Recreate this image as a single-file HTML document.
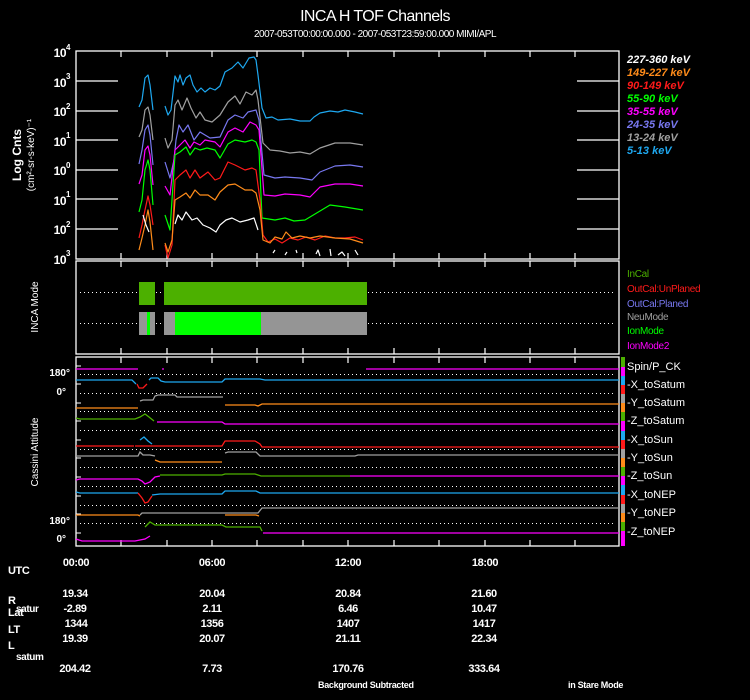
<!DOCTYPE html>
<html><head><meta charset="utf-8"><style>
html,body{margin:0;padding:0;background:#000;}
svg{display:block;font-family:"Liberation Sans",Arial,sans-serif;}
</style></head><body>
<svg width="750" height="700" viewBox="0 0 750 700" xmlns="http://www.w3.org/2000/svg">
<rect width="750" height="700" fill="#000"/>
<text x="375" y="21" fill="#fff" font-size="16" text-anchor="middle" letter-spacing="-0.6">INCA H TOF Channels</text>
<text x="375" y="37" fill="#fff" font-size="10" text-anchor="middle" letter-spacing="-0.5">2007-053T00:00:00.000 - 2007-053T23:59:00.000 MIMI/APL</text>

<g fill="none" stroke="#fff" stroke-width="1.3">
<rect x="76" y="51" width="543" height="208"/>
<rect x="76" y="261" width="543" height="93"/>
<rect x="76" y="357" width="543" height="189"/>
</g>
<g stroke="#fff" stroke-width="1.2">
<path d="M121,51v6M167,51v6M212,51v6M257,51v6M303,51v6M348,51v6M394,51v6M439,51v6M485,51v6M530,51v6M575,51v6"/>
<path d="M121,259v-6M167,259v-6M212,259v-6M257,259v-6M303,259v-6M348,259v-6M394,259v-6M439,259v-6M485,259v-6M530,259v-6M575,259v-6"/>
<path d="M121,261v6M167,261v6M212,261v6M257,261v6M303,261v6M348,261v6M394,261v6M439,261v6M485,261v6M530,261v6M575,261v6"/>
<path d="M121,354v-6M167,354v-6M212,354v-6M257,354v-6M303,354v-6M348,354v-6M394,354v-6M439,354v-6M485,354v-6M530,354v-6M575,354v-6"/>
<path d="M121,357v6M167,357v6M212,357v6M257,357v6M303,357v6M348,357v6M394,357v6M439,357v6M485,357v6M530,357v6M575,357v6"/>
<path d="M121,546v-6M167,546v-6M212,546v-6M257,546v-6M303,546v-6M348,546v-6M394,546v-6M439,546v-6M485,546v-6M530,546v-6M575,546v-6"/>
<path d="M76,81h42M76,111h42M76,140h42M76,170h42M76,199h42M76,229h42M619,81h-42M619,111h-42M619,140h-42M619,170h-42M619,199h-42M619,229h-42"/>
</g>
<g fill="#fff" font-size="12" font-weight="bold" text-anchor="end" letter-spacing="-0.5">
<text x="66" y="57">10</text><text x="66" y="87">10</text><text x="66" y="116">10</text><text x="66" y="146">10</text><text x="66" y="175">10</text><text x="66" y="205">10</text><text x="66" y="234">10</text><text x="66" y="264">10</text>
</g>
<g fill="#fff" font-size="8" font-weight="bold">
<text x="66" y="50">4</text><text x="66" y="79">3</text><text x="66" y="109">2</text><text x="66" y="138">1</text><text x="66" y="168">0</text><text x="66" y="197">1</text><text x="66" y="227">2</text><text x="66" y="256">3</text>
</g>
<text transform="translate(21,155) rotate(-90)" fill="#fff" font-size="12" font-weight="bold" text-anchor="middle">Log Cnts</text>
<text transform="translate(34,155) rotate(-90)" fill="#fff" font-size="10" text-anchor="middle">(cm²-sr-s-keV)⁻¹</text>

<g fill="none" stroke-width="1.2" stroke-linejoin="round">
<path stroke="#1ea8f0" d="M139,107L142,100L145,78L148,75L150,85L153,110M165,106L168,115L171,110L175,76L178,82L180,75L183,85L186,78L190,75L193,85L197,92L201,88L205,92L210,88L215,90L220,86L225,72L232,68L238,62L243,68L249,58L254,57L256,60L258,75L262,108L266,118L272,117L278,120L290,119L300,121L310,121L314,117L320,113L330,111L338,112L345,110L355,112L363,114"/>
<path stroke="#a0a0a0" d="M139,137L142,130L145,110L148,107L150,115L153,140M165,138L168,148L172,140L175,105L178,100L182,110L187,98L191,108L196,118L200,112L205,120L212,122L220,115L228,102L235,96L240,104L246,92L252,95L256,90L258,100L263,143L270,150L280,151L290,153L300,152L310,154L320,148L335,143L350,143L363,145"/>
<path stroke="#7878f0" d="M139,164L142,150L145,130L148,125L150,135L153,165M165,162L170,178L174,160L176,140L179,125L183,132L188,125L194,140L200,132L210,138L220,137L228,120L235,115L243,118L248,112L256,110L259,120L264,175L275,178L285,177L300,178L312,180L320,172L335,166L350,165L363,167"/>
<path stroke="#ff00ff" d="M139,184L142,175L145,150L148,146L150,155L153,185M165,186L170,195L175,150L180,145L185,140L190,148L194,142L200,145L205,140L215,142L220,147L228,132L235,128L243,132L250,122L256,125L259,130L264,195L275,196L285,194L300,195L310,197L320,187L335,184L350,184L363,186"/>
<path stroke="#00ff00" d="M139,212L142,200L145,170L148,160L150,170L153,205M165,215L170,230L175,155L180,152L186,147L190,155L195,148L200,150L207,148L215,150L220,158L228,144L235,140L245,142L252,140L256,142L259,150L262,218L275,220L285,218L294,221L305,220L315,214L330,205L345,207L363,210"/>
<path stroke="#ff1a1a" d="M139,238L142,225L145,210L148,196L150,205L153,225M165,245L168,258L172,245L175,180L180,175L186,170L190,178L195,170L200,178L208,172L215,180L220,178L228,162L235,165L245,170L252,168L256,170L260,200L263,235L268,242L275,239L282,243L290,238L298,240L306,237L315,240L325,236L335,238L345,238L355,237L363,240"/>
<path stroke="#ff8c1a" d="M139,250L142,238L145,225L148,210L150,222L153,250M165,243L168,252L172,240L175,200L180,197L186,193L190,198L195,190L200,195L208,195L215,200L220,192L228,185L235,184L245,190L252,190L256,193L260,210L263,240L270,243L275,237L282,239L286,232L292,238L300,236L310,238L320,236L335,238L350,239L363,243"/>
<path stroke="#ffffff" d="M143,215L146,225L149,232M175,224L178,215L182,220L186,212L192,220L197,218L203,225L210,228L216,232L220,225L226,220L232,218L240,222L248,220L254,218L258,230M273,253L275,250M285,255L287,252M296,250L297,253M316,254L318,250L320,256M330,249L331,256M338,255L342,252L345,256M355,250L358,255"/>
</g>
<g font-size="11" font-weight="bold" font-style="italic">
<text x="627" y="63" fill="#fff">227-360 keV</text>
<text x="627" y="76" fill="#ff8c1a">149-227 keV</text>
<text x="627" y="89" fill="#ff1a1a">90-149 keV</text>
<text x="627" y="102" fill="#00ff00">55-90 keV</text>
<text x="627" y="115" fill="#ff00ff">35-55 keV</text>
<text x="627" y="128" fill="#7878f0">24-35 keV</text>
<text x="627" y="141" fill="#a0a0a0">13-24 keV</text>
<text x="627" y="154" fill="#1ea8f0">5-13 keV</text>
</g>

<g stroke="#fff" stroke-dasharray="1,3" stroke-width="1">
<path d="M80,292.5H615M80,323.5H615"/>
</g>
<rect x="139" y="282" width="16" height="23" fill="#4cb000"/>
<rect x="164" y="282" width="203" height="23" fill="#4cb000"/>
<rect x="139" y="312" width="16" height="23" fill="#959595"/>
<rect x="147" y="312" width="3" height="23" fill="#00ff00"/>
<rect x="164" y="312" width="203" height="23" fill="#959595"/>
<rect x="175" y="312" width="86" height="23" fill="#00ff00"/>
<text transform="translate(38,307) rotate(-90)" fill="#fff" font-size="10" text-anchor="middle">INCA Mode</text>
<g font-size="10" letter-spacing="-0.3">
<text x="627" y="277" fill="#4cb000">InCal</text>
<text x="627" y="292" fill="#ff1a1a">OutCal:UnPlaned</text>
<text x="627" y="307" fill="#7878f0">OutCal:Planed</text>
<text x="627" y="320" fill="#a0a0a0">NeuMode</text>
<text x="627" y="334" fill="#00ff00">IonMode</text>
<text x="627" y="349" fill="#ff00ff">IonMode2</text>
</g>

<g stroke="#fff" stroke-dasharray="1,3" stroke-width="1">
<path d="M80,374.5H615M80,393.5H615M80,411.5H615M80,430.5H615M80,449.5H615M80,467.5H615M80,486.5H615M80,505.5H615M80,523.5H615"/>
</g>
<g stroke="#fff" stroke-width="1"><path d="M76,366h5M76,384h5M76,403h5M76,421h5M76,440h5M76,458h5M76,477h5M76,496h5M76,514h5M76,533h5"/></g>
<g fill="none" stroke-width="1.3">
<path stroke="#ff00ff" d="M76,369H138M162,369h2M366,369H619"/>
<path stroke="#1ea8f0" d="M76,380H132L136,384M149,380L151,378H158L161,381L165,382H222L225,379H260L265,380H619"/>
<path stroke="#ff1a1a" d="M137,384L139,388H143L147,384"/>
<path stroke="#a0a0a0" d="M140,401L143,400H153L155,396L158,395H175L177,397H223"/>
<path stroke="#ff8c1a" d="M76,408H138M225,405H255L258,406L262,404H619"/>
<path stroke="#4cb000" d="M76,418L80,419H135L140,417L145,414L149,417L154,421"/>
<path stroke="#ff00ff" d="M157,422H222L225,424H262L265,424H619"/>
<path stroke="#ff1a1a" d="M76,446H134M135,446H222L225,441H255L260,444L262,447H619"/>
<path stroke="#1ea8f0" d="M140,440L144,437L148,441L152,444"/>
<path stroke="#a0a0a0" d="M76,456H138L140,452L143,455H150L155,456M225,453L228,452H256L260,456H355L358,455H619"/>
<path stroke="#ff8c1a" d="M155,460L160,462H222"/>
<path stroke="#ff00ff" d="M76,480L80,479H138L142,481L145,484L150,482L155,477L160,476"/>
<path stroke="#4cb000" d="M160,475H222L225,474H255L261,476H350"/>
<path stroke="#ff00ff" d="M350,476H619"/>
<path stroke="#1ea8f0" d="M76,492L80,493H138M152,495L160,494H222L225,491H256L260,493H619"/>
<path stroke="#ff1a1a" d="M138,493L142,498L145,503L148,502L152,496"/>
<path stroke="#ff8c1a" d="M76,515H138L140,516M225,515H256L259,516"/>
<path stroke="#a0a0a0" d="M140,515L142,513H222L225,513H258L262,508H619"/>
<path stroke="#4cb000" d="M145,527L150,522L155,525H222L226,527H260L262,531"/>
<path stroke="#ff00ff" d="M76,539L82,541H135L145,539L150,536M263,533H619"/>
</g>
<g fill="#fff" font-size="10" font-weight="bold" text-anchor="end">
<text x="70" y="376">180°</text><text x="66" y="395">0°</text><text x="70" y="524">180°</text><text x="66" y="542">0°</text>
</g>
<text transform="translate(38,452) rotate(-90)" fill="#fff" font-size="10" text-anchor="middle">Cassini Attitude</text>
<g>
<rect x="621" y="357" width="4" height="10" fill="#4cb000"/>
<rect x="621" y="367" width="4" height="9" fill="#ff00ff"/>
<rect x="621" y="376" width="4" height="9" fill="#1ea8f0"/>
<rect x="621" y="385" width="4" height="9" fill="#ff1a1a"/>
<rect x="621" y="394" width="4" height="9" fill="#a0a0a0"/>
<rect x="621" y="403" width="4" height="9" fill="#ff8c1a"/>
<rect x="621" y="412" width="4" height="9" fill="#4cb000"/>
<rect x="621" y="421" width="4" height="10" fill="#ff00ff"/>
<rect x="621" y="431" width="4" height="9" fill="#1ea8f0"/>
<rect x="621" y="440" width="4" height="9" fill="#ff1a1a"/>
<rect x="621" y="449" width="4" height="9" fill="#a0a0a0"/>
<rect x="621" y="458" width="4" height="9" fill="#ff8c1a"/>
<rect x="621" y="467" width="4" height="9" fill="#4cb000"/>
<rect x="621" y="476" width="4" height="9" fill="#ff00ff"/>
<rect x="621" y="485" width="4" height="10" fill="#1ea8f0"/>
<rect x="621" y="495" width="4" height="9" fill="#ff1a1a"/>
<rect x="621" y="504" width="4" height="9" fill="#a0a0a0"/>
<rect x="621" y="513" width="4" height="9" fill="#ff8c1a"/>
<rect x="621" y="522" width="4" height="9" fill="#4cb000"/>
<rect x="621" y="531" width="4" height="15" fill="#ff00ff"/>
</g>
<g fill="#fff" font-size="11">
<text x="627" y="370">Spin/P_CK</text>
<text x="627" y="388">-X_toSatum</text>
<text x="627" y="406">-Y_toSatum</text>
<text x="627" y="424">-Z_toSatum</text>
<text x="627" y="443">-X_toSun</text>
<text x="627" y="461">-Y_toSun</text>
<text x="627" y="479">-Z_toSun</text>
<text x="627" y="498">-X_toNEP</text>
<text x="627" y="516">-Y_toNEP</text>
<text x="627" y="535">-Z_toNEP</text>
</g>

<g fill="#fff" font-size="11" font-weight="bold" letter-spacing="-0.4">
<text x="8" y="574">UTC</text>
<text x="8" y="604">R</text><text x="16" y="612" font-size="10">satur</text>
<text x="8" y="616">Lat</text>
<text x="8" y="633">LT</text>
<text x="8" y="649">L</text><text x="16" y="660" font-size="10">satum</text>
</g>
<g fill="#fff" font-size="11" font-weight="bold" text-anchor="middle" letter-spacing="-0.4">
<text x="76" y="566">00:00</text><text x="212" y="566">06:00</text><text x="348" y="566">12:00</text><text x="485" y="566">18:00</text>
<text x="75" y="597">19.34</text><text x="212" y="597">20.04</text><text x="348" y="597">20.84</text><text x="484" y="597">21.60</text>
<text x="75" y="612">-2.89</text><text x="212" y="612">2.11</text><text x="348" y="612">6.46</text><text x="484" y="612">10.47</text>
<text x="76" y="627">1344</text><text x="212" y="627">1356</text><text x="348" y="627">1407</text><text x="484" y="627">1417</text>
<text x="75" y="642">19.39</text><text x="212" y="642">20.07</text><text x="348" y="642">21.11</text><text x="484" y="642">22.34</text>
<text x="75" y="672">204.42</text><text x="212" y="672">7.73</text><text x="348" y="672">170.76</text><text x="484" y="672">333.64</text>
</g>
<g fill="#fff" font-size="9" font-weight="bold" letter-spacing="-0.3">
<text x="318" y="688">Background Subtracted</text>
<text x="568" y="688">in Stare Mode</text>
</g>
</svg>
</body></html>
